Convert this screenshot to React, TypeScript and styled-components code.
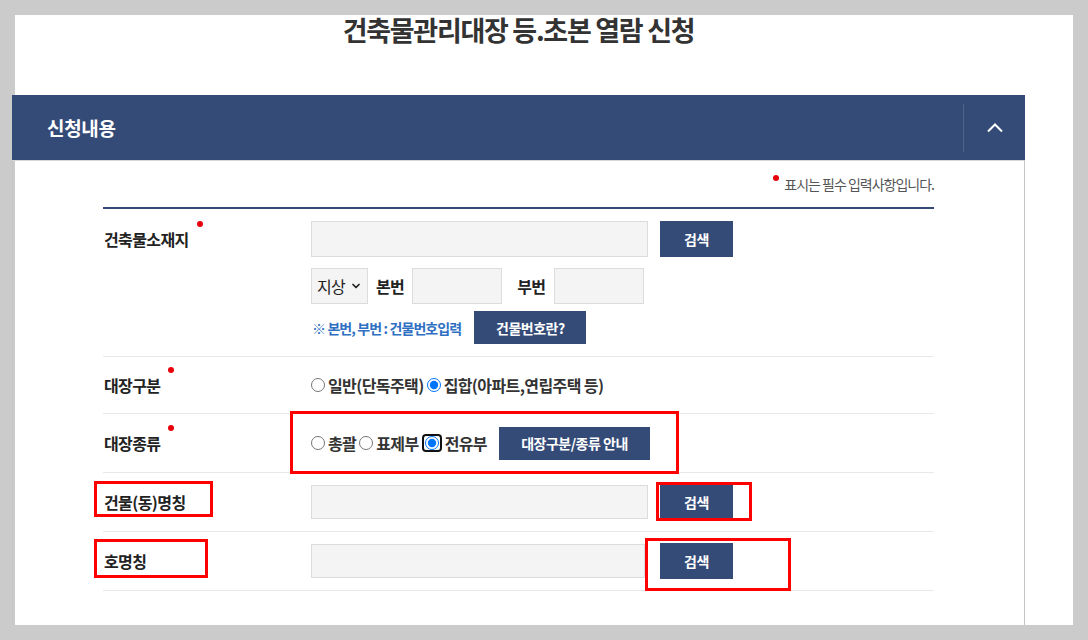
import styled, { createGlobalStyle } from "styled-components";
import { ChevronDown } from "lucide-react";

const NAVY = "#344b78";

const GlobalStyle = createGlobalStyle`
  html, body {
    margin: 0;
    padding: 0;
  }
  body {
    background: #cbcbcb;
    font-family: "Noto Sans CJK KR", "Noto Sans", sans-serif;
    color: #333;
  }
`;

const Page = styled.div`
  margin: 15px 0 0 15px;
  width: 1058px;
  height: 610px;
  background: #fff;
`;

const Column = styled.div`
  margin-left: -3px;
  width: 1013px;
`;

const Title = styled.h1`
  margin: 0;
  height: 80px;
  font-size: 27px;
  line-height: 30px;
  font-weight: 700;
  text-align: center;
  letter-spacing: -1.3px;
  color: #333;
`;

const Header = styled.div`
  display: flex;
  align-items: center;
  justify-content: space-between;
  height: 65px;
  padding-left: 35px;
  background: ${NAVY};
`;

const HeaderTitle = styled.h2`
  margin: 0;
  font-size: 19px;
  font-weight: 700;
  letter-spacing: -0.3px;
  color: #fff;
`;

const Toggle = styled.button`
  display: flex;
  align-items: center;
  justify-content: center;
  width: 62px;
  height: 48px;
  padding: 0;
  border: 0;
  border-left: 1px solid rgba(255, 255, 255, 0.14);
  background: transparent;
  color: #fff;
`;

const Box = styled.div`
  box-sizing: border-box;
  height: 477px;
  padding: 0 90px;
  border: 1px solid #c6c6c6;
  border-top-color: #d8d8d8;
  border-bottom-color: #a8a8a8;
`;

const Notice = styled.p`
  margin: 0;
  padding: 14px 0;
  text-align: right;
  font-size: 14px;
  line-height: 18px;
  letter-spacing: -1px;
  color: #555;
`;

const Dot = styled.span`
  display: inline-block;
  width: 6px;
  height: 6px;
  margin-right: 5px;
  border-radius: 50%;
  background: #e8000b;
  vertical-align: 9px;
`;

const Table = styled.div`
  border-top: 2px solid ${NAVY};
`;

const Row = styled.div<{ $h?: number; $start?: boolean }>`
  position: relative;
  display: grid;
  grid-template-columns: 208px 1fr;
  align-items: ${(p) => (p.$start ? "start" : "center")};
  height: ${(p) => (p.$h ? `${p.$h}px` : "auto")};
  padding: ${(p) => (p.$start ? "12px 0" : "0")};
  border-bottom: 1px solid #e8e8e8;
`;

const Label = styled.div<{ $required?: boolean; $offset?: number }>`
  position: relative;
  justify-self: start;
  margin-top: ${(p) => p.$offset ?? 0}px;
  margin-left: 1px;
  font-size: 16px;
  line-height: 20px;
  font-weight: 700;
  letter-spacing: -0.6px;
  color: #222;

  &::after {
    content: "";
    display: ${(p) => (p.$required ? "block" : "none")};
    position: absolute;
    right: -14px;
    top: -8px;
    width: 6px;
    height: 6px;
    border-radius: 50%;
    background: #e8000b;
  }
`;

const Fields = styled.div`
  display: flex;
  flex-direction: column;
`;

const Line = styled.div<{ $gap?: number; $mt?: number }>`
  display: flex;
  align-items: center;
  gap: ${(p) => p.$gap ?? 12}px;
  margin-top: ${(p) => p.$mt ?? 0}px;
`;

const TextInput = styled.input<{ $w: number; $h?: number }>`
  box-sizing: border-box;
  width: ${(p) => p.$w}px;
  height: ${(p) => p.$h ?? 36}px;
  padding: 0 10px;
  border: 1px solid #dcdcdc;
  background: #f4f4f4;
  outline: none;
`;

const Btn = styled.button<{ $w: number; $h?: number }>`
  box-sizing: border-box;
  width: ${(p) => p.$w}px;
  height: ${(p) => p.$h ?? 36}px;
  padding: 0;
  border: 0;
  background: ${NAVY};
  color: #fff;
  font-family: inherit;
  font-size: 14px;
  font-weight: 700;
  letter-spacing: -0.5px;
`;

const SelectBox = styled.div`
  box-sizing: border-box;
  display: flex;
  align-items: center;
  gap: 5px;
  width: 57px;
  height: 36px;
  padding-left: 5px;
  border: 1px solid #dcdcdc;
  background: #f4f4f4;
  font-size: 16px;
  letter-spacing: -0.8px;
  color: #222;
`;

const SubLabel = styled.span<{ $ml?: number }>`
  margin-left: ${(p) => p.$ml ?? 0}px;
  font-size: 16px;
  font-weight: 700;
  letter-spacing: -0.6px;
  color: #222;
`;

const Hint = styled.span`
  margin-left: 1px;
  font-size: 14px;
  font-weight: 700;
  letter-spacing: -0.9px;
  color: #2f70c2;
`;

const Radios = styled.div`
  display: flex;
  align-items: center;
  gap: 3px;
`;

const RadioLabel = styled.label`
  display: inline-flex;
  align-items: center;
  gap: 3px;
  font-size: 16px;
  font-weight: 700;
  letter-spacing: -0.6px;
  color: #333;
`;

const Radio = styled.input.attrs({ type: "radio" })`
  width: 14px;
  height: 14px;
  margin: 0;
`;

const FocusRing = styled.span`
  display: inline-flex;
  padding: 0 1px;
  border: 2px solid #111;
  border-radius: 4px;
`;

const GuideBtn = styled(Btn)`
  margin-left: 9px;
`;

const Mark = styled.div`
  position: absolute;
  box-sizing: border-box;
  border: 3px solid #ff0000;
  pointer-events: none;
`;

export default function App() {
  return (
    <>
      <GlobalStyle />
      <Page>
        <Column>
          <Title>건축물관리대장 등.초본 열람 신청</Title>
          <Header>
            <HeaderTitle>신청내용</HeaderTitle>
            <Toggle aria-label="접기">
              <svg width="16" height="11" viewBox="0 0 16 11">
                <polyline points="1,9.5 8,2.5 15,9.5" fill="none" stroke="#fff" strokeWidth="2" />
              </svg>
            </Toggle>
          </Header>
          <Box>
            <Notice>
              <Dot />
              표시는 필수 입력사항입니다.
            </Notice>
            <Table>
              <Row $start>
                <Label $required $offset={8}>건축물소재지</Label>
                <Fields>
                  <Line>
                    <TextInput $w={337} />
                    <Btn $w={73}>검색</Btn>
                  </Line>
                  <Line $gap={8} $mt={11}>
                    <SelectBox>
                      지상 <ChevronDown size={12} strokeWidth={3.5} />
                    </SelectBox>
                    <SubLabel>본번</SubLabel>
                    <TextInput $w={90} />
                    <SubLabel $ml={7}>부번</SubLabel>
                    <TextInput $w={90} />
                  </Line>
                  <Line $gap={13} $mt={7}>
                    <Hint>※ 본번, 부번 : 건물번호입력</Hint>
                    <Btn $w={112} $h={33}>건물번호란?</Btn>
                  </Line>
                </Fields>
              </Row>
              <Row $h={56}>
                <Label $required>대장구분</Label>
                <Radios>
                  <RadioLabel>
                    <Radio name="kind" />
                    일반(단독주택)
                  </RadioLabel>
                  <RadioLabel>
                    <Radio name="kind" defaultChecked />
                    집합(아파트,연립주택 등)
                  </RadioLabel>
                </Radios>
              </Row>
              <Row $h={58}>
                <Label $required>대장종류</Label>
                <Radios>
                  <RadioLabel>
                    <Radio name="type" />
                    총괄
                  </RadioLabel>
                  <RadioLabel>
                    <Radio name="type" />
                    표제부
                  </RadioLabel>
                  <RadioLabel>
                    <FocusRing>
                      <Radio name="type" defaultChecked />
                    </FocusRing>
                    전유부
                  </RadioLabel>
                  <GuideBtn $w={151} $h={33}>대장구분/종류 안내</GuideBtn>
                </Radios>
                <Mark style={{ left: 187, top: -3, width: 389, height: 63 }} />
              </Row>
              <Row $h={58}>
                <Label>건물(동)명칭</Label>
                <Line>
                  <TextInput $w={337} $h={34} />
                  <Btn $w={73} $h={35}>검색</Btn>
                </Line>
                <Mark style={{ left: -9, top: 8, width: 119, height: 36 }} />
                <Mark style={{ left: 553, top: 9, width: 96, height: 39 }} />
              </Row>
              <Row $h={58}>
                <Label>호명칭</Label>
                <Line $gap={15}>
                  <TextInput $w={334} $h={34} />
                  <Btn $w={73}>검색</Btn>
                </Line>
                <Mark style={{ left: -9, top: 7, width: 114, height: 39 }} />
                <Mark style={{ left: 542, top: 6, width: 146, height: 53 }} />
              </Row>
            </Table>
          </Box>
        </Column>
      </Page>
    </>
  );
}
